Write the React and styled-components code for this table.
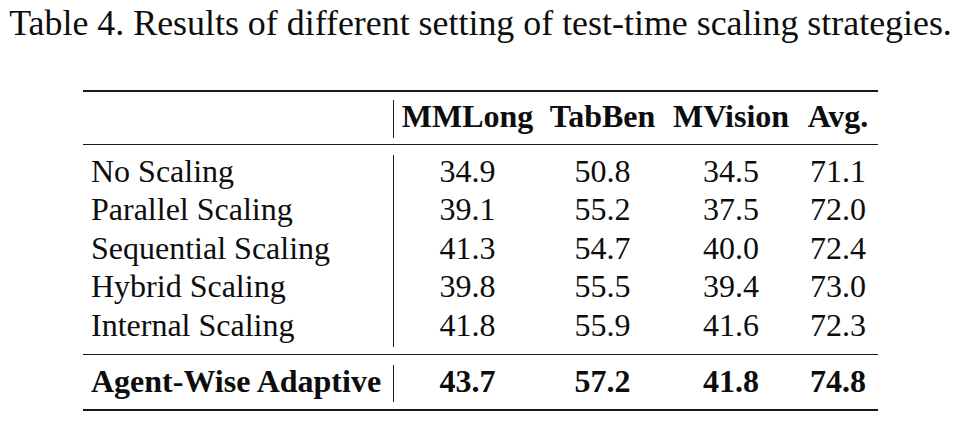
import React from 'react'
import styled, { createGlobalStyle } from 'styled-components'

const GlobalStyle = createGlobalStyle`
  html, body {
    margin: 0;
    padding: 0;
    background: #fff;
  }
  body {
    font-family: 'Liberation Serif', 'Times New Roman', serif;
    color: #0d0d0d;
  }
`

const Page = styled.div`
  width: 961px;
  height: 422px;
  display: flex;
  flex-direction: column;
  align-items: center;
  overflow: hidden;
`

const Caption = styled.div`
  font-size: 35.9px;
  line-height: 1;
  padding-top: 6px;
  white-space: nowrap;
`

const Table = styled.div`
  width: 795px;
  margin-top: 48px;
  border-top: 2.5px solid #1a1a1a;
  border-bottom: 2.5px solid #1a1a1a;
`

const Section = styled.div`
  padding: ${p => p.$pad};
  border-top: ${p => (p.$ruled ? '1.4px solid #1a1a1a' : 'none')};
`

const Row = styled.div`
  display: grid;
  grid-template-columns: 311px 147px 123px 134px 80px;
  height: ${p => p.$h}px;
  font-size: 32px;
  line-height: 1;
  font-weight: ${p => (p.$bold ? 700 : 400)};
`

const Label = styled.div`
  padding-left: 8px;
  border-right: 1.4px solid #1a1a1a;
  white-space: nowrap;
`

const Cell = styled.div`
  text-align: center;
  white-space: nowrap;
`

const columns = ['MMLong', 'TabBen', 'MVision', 'Avg.']

const rows = [
  ['No Scaling', '34.9', '50.8', '34.5', '71.1'],
  ['Parallel Scaling', '39.1', '55.2', '37.5', '72.0'],
  ['Sequential Scaling', '41.3', '54.7', '40.0', '72.4'],
  ['Hybrid Scaling', '39.8', '55.5', '39.4', '73.0'],
  ['Internal Scaling', '41.8', '55.9', '41.6', '72.3'],
]

const best = ['Agent-Wise Adaptive', '43.7', '57.2', '41.8', '74.8']

const TableRow = ({ cells, h, bold }) => (
  <Row $h={h} $bold={bold}>
    <Label>{cells[0]}</Label>
    {cells.slice(1).map((c, i) => (
      <Cell key={i}>{c}</Cell>
    ))}
  </Row>
)

export default function App() {
  return (
    <Page>
      <GlobalStyle />
      <Caption>Table 4. Results of different setting of test-time scaling strategies.</Caption>
      <Table>
        <Section $pad="8px 0 6.5px">
          <TableRow cells={['', ...columns]} h={38} bold />
        </Section>
        <Section $ruled $pad="9.5px 0 6.5px">
          {rows.map(r => (
            <TableRow key={r[0]} cells={r} h={38.5} />
          ))}
        </Section>
        <Section $ruled $pad="10px 0 7px">
          <TableRow cells={best} h={37} bold />
        </Section>
      </Table>
    </Page>
  )
}
